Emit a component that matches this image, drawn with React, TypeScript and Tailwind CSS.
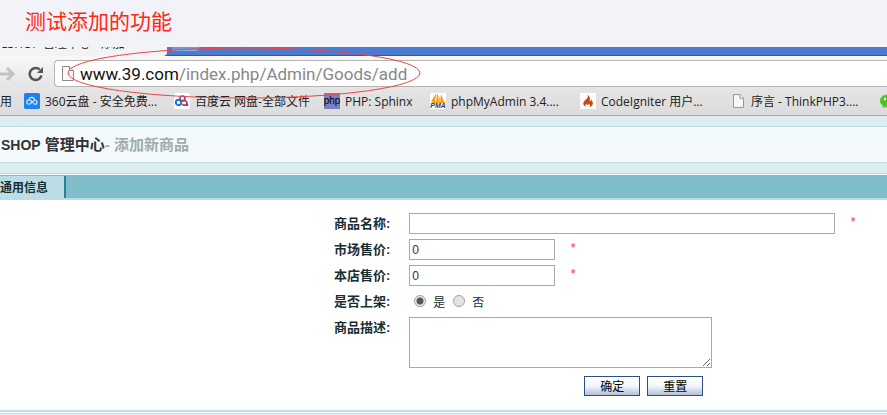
import type { ReactNode } from "react";

const uiFont = "font-['Open_Sans','Noto_Sans_CJK_SC',sans-serif]";
const pageFont = "font-['Liberation_Sans','Noto_Sans_CJK_SC',sans-serif]";

function PageIcon({ className }: { className: string }) {
  return (
    <svg viewBox="0 0 12 15" className={className} fill="#f8f8f8" stroke="#8c8c8c" aria-hidden="true">
      <path d="M.5.5h7l4 4v10H.5z" />
      <path d="M7.5.5v4h4" />
    </svg>
  );
}

function CloudDriveIcon() {
  return (
    <svg viewBox="0 0 16 16" className="size-4" aria-hidden="true">
      <rect width="16" height="16" rx="1.5" fill="#2380ee" />
      <path
        d="M9.500 10.200 8 8.700C6.800 7.500 5.900 6.900 4.900 6.900a2.100 2.100 0 0 0 0 4.300c1.500 0 2.500-1.200 3.400-2.300.8-1 1.500-1.700 2.700-1.700a2 2 0 0 1 0 4c-.6 0-1.100-.3-1.500-1M5 6.800C5.300 5.200 6.400 4.400 7.800 4.400c1.500 0 2.600 1 2.900 2.600"
        fill="none"
        stroke="#c9f1ff"
        strokeWidth="1.100"
      />
    </svg>
  );
}

function BaiduDriveIcon() {
  return (
    <svg viewBox="0 0 16 16" className="size-4" aria-hidden="true">
      <rect width="16" height="16" rx="2" fill="#fff" />
      <circle cx="8.500" cy="5.500" r="2.500" fill="none" stroke="#1d6fd8" strokeWidth="1.600" />
      <circle cx="4.500" cy="9.500" r="2.700" fill="none" stroke="#1d6fd8" strokeWidth="1.900" />
      <path d="M7 8.500c1.800-1.500 3.400-1.500 4.800-.4 2 1.500 1.300 3.900-.8 4.100-1.200.1-2-.4-2.600-1.300" fill="none" stroke="#e02c2c" strokeWidth="1.800" />
      <circle cx="13.200" cy="12" r="1.200" fill="#1d6fd8" />
    </svg>
  );
}

function PhpIcon() {
  return (
    <span className="flex size-4 items-center justify-center overflow-hidden bg-[#7b7fc0] font-['Liberation_Sans',sans-serif] text-[10px] leading-4 text-black">
      php
    </span>
  );
}

function PmaIcon() {
  return (
    <span className="relative flex size-4 items-end justify-center overflow-hidden bg-white font-['Liberation_Sans',sans-serif] text-[7px] leading-[6px] font-bold text-[#33335f] italic">
      <svg viewBox="0 0 16 10" className="absolute top-0 left-0 h-[10px] w-4" aria-hidden="true">
        <path d="M6 0 5 9H1zM7 1h1l1 8H6zM11 1l3 8h-4zM3 9h12v1H2z" fill="#f59c12" />
        <path d="m9 2 2 7H9z" fill="#f8c25c" />
      </svg>
      PMA
    </span>
  );
}

function FlameIcon() {
  return (
    <svg viewBox="0 0 16 16" className="size-4" aria-hidden="true">
      <path fill="#fff" d="M0 0h16v16H0z" />
      <path
        d="M7.600 1.800c.8 1.700.1 2.900-1.200 4.200C5 7.300 3.300 8.500 3.300 10.600c0 1.500 1 2.800 2.700 3.300-1-1.200-.6-2.500.6-3.300-.1 1 .3 1.500 1 1.500.8-.1 1-.9.7-1.700 1.600.8 2.200 2.300 1.200 3.600 2-.5 3.400-1.900 3.400-3.800 0-1.800-1.400-2.700-1.800-4.200-.5.800-.5 1.500-.1 2.300-.7 0-1.300-.4-1.300-1.300.5-2-.2-4-2.100-5.200"
        fill="#d1450c"
      />
    </svg>
  );
}

function ChatIcon() {
  return (
    <svg viewBox="0 0 16 16" className="size-4" aria-hidden="true">
      <path d="M8 1.500c4.500 0 8 2.900 8 6.500s-3.500 6.500-8 6.500c-1 0-2-.1-2.900-.4L2.500 15l.5-2.200C1.200 11.600 0 9.900 0 8c0-3.600 3.500-6.500 8-6.500" fill="#52c22b" />
      <circle cx="5" cy="6" r="1.200" fill="#fff" />
      <circle cx="11" cy="6" r="1.200" fill="#fff" />
    </svg>
  );
}

function Bookmark({ icon, label, narrow }: { icon: ReactNode; label: string; narrow?: boolean }) {
  return (
    <a href="#" className={`flex shrink-0 items-center gap-[5px] ${narrow ? "w-[106px]" : "w-[150px]"}`}>
      {icon}
      <span className="pt-px whitespace-nowrap">{label}</span>
    </a>
  );
}

function Browser() {
  return (
    <div className={`relative ${uiFont}`}>
      <div className="flex h-[9px] border-b border-[#2f57a3] bg-[#4a7bd0]">
        <div className="flex h-[9px] w-[167px] shrink-0 items-end overflow-hidden rounded-br bg-[#f3f3f3] text-[12px] leading-4 whitespace-nowrap text-[#222]">
          <span className="mb-1">CSHOP 管理中心 - 添加 ×</span>
        </div>
        <div className="ml-[5px] h-1 w-[27px] rounded-b-sm border-b border-[#8fb1e8] bg-[#6f97dc]" />
      </div>
      <div className="flex h-[31px] items-center bg-gradient-to-b from-[#f8f8f8] to-[#e5e5e5] pt-1">
        <button type="button" aria-label="Forward" className="w-[27px] shrink-0">
          <svg viewBox="0 0 27 18" className="h-[18px] w-[27px]" fill="none" stroke="#c2c2c2" strokeWidth="3">
            <path d="M0 9h12M7 3l6 6-6 6" />
          </svg>
        </button>
        <button type="button" aria-label="Reload" className="w-[27px] shrink-0">
          <svg viewBox="0 0 27 18" className="h-[18px] w-[27px]" fill="none" stroke="#555" strokeWidth="2.500">
            <path d="M14.500 10.500A6 6 0 1 1 12.800 4.600" />
            <path d="M16 2v6H10z" fill="#555" stroke="none" />
          </svg>
        </button>
        <div className="flex h-[27px] min-w-0 flex-1 items-center gap-[6px] rounded-l-sm border border-r-0 border-[#b4b4b4] bg-white pl-[7px]">
          <PageIcon className="h-[15px] w-3 shrink-0" />
          <a href="#" className="font-['Roboto',sans-serif] text-[17px] leading-6 whitespace-nowrap text-[#888]">
            <span className="text-[#111]">www.39.com</span>/index.php/Admin/Goods/add
          </a>
        </div>
      </div>
      <nav className="flex h-[29px] items-center overflow-hidden border-b border-[#a7a7a7] bg-gradient-to-b from-[#e5e5e5] to-[#dcdcdc] text-[12px] leading-4 text-[#222]">
        <a href="#" className="w-6 shrink-0 pt-px">用</a>
        <Bookmark icon={<CloudDriveIcon />} label="360云盘 - 安全免费..." />
        <Bookmark icon={<BaiduDriveIcon />} label="百度云 网盘-全部文件" />
        <Bookmark icon={<PhpIcon />} label="PHP: Sphinx" narrow />
        <Bookmark icon={<PmaIcon />} label="phpMyAdmin 3.4...." />
        <Bookmark icon={<FlameIcon />} label="CodeIgniter 用户..." />
        <Bookmark icon={<span className="flex w-4 justify-center"><PageIcon className="h-[14px] w-[11px]" /></span>} label="序言 - ThinkPHP3...." />
        <Bookmark icon={<ChatIcon />} label="" />
      </nav>
      <svg viewBox="0 0 354 52" className="pointer-events-none absolute top-0 left-[67px] h-[52px] w-[354px]" fill="none" stroke="#ee4545" aria-hidden="true">
        <ellipse cx="177" cy="26" rx="176" ry="25" />
      </svg>
    </div>
  );
}

function Row({ label, htmlFor, children }: { label: string; htmlFor?: string; children: ReactNode }) {
  return (
    <div className="grid h-[21px] grid-cols-[44%_1fr]">
      <label htmlFor={htmlFor} id={htmlFor ? undefined : "sale-label"} className="text-right text-[13px] leading-[22px] font-bold">
        {label}:
      </label>
      <div className="flex items-start pl-[19px]">{children}</div>
    </div>
  );
}

function Star() {
  return <span className="ml-[14px] font-['Liberation_Mono',monospace] text-[13px] leading-5 text-[#ff3050]">*</span>;
}

const field = "h-[21px] border border-[#a9a9a9] bg-white px-[2px] font-['Liberation_Sans',sans-serif] text-[12px] text-[#333] outline-none";
const action =
  "h-5 w-14 border border-[#2b5089] bg-gradient-to-b from-white via-[#f3f8fc] to-[#b3bfd8] pt-px text-[12px] leading-[18px] text-black";
const radio =
  "size-3 appearance-none rounded-full border border-[#a2a2a2] bg-[#e3e3e3] checked:bg-[radial-gradient(circle,#555_3px,#e6e6e6_4px)]";

export default function App() {
  return (
    <div className="overflow-hidden bg-[#ddeef2]">
      <header className="bg-[#f2f3f8] px-[25px] pb-[7px]">
        <p className="font-['Noto_Sans_CJK_SC',sans-serif] text-[21px] leading-10 text-[#ff2614]">测试添加的功能</p>
      </header>
      <Browser />
      <main className={`pt-[10px] text-[12px] text-[#192e32] ${pageFont}`}>
        <h1 className="border-y border-[#bbdde5] bg-[#f4fafb] pl-px text-[15px] leading-[35px] font-bold text-[#333]">
          <span className="text-[14px] leading-none">SHOP</span> 管理中心<span className="text-[#9eadac]">- 添加新商品</span>
        </h1>
        <div className="mt-[10px] flex h-[27px] border-t border-b-2 border-[#bbdde5] bg-[#80bdcb] pt-[2px] shadow-[inset_0_1px_#f4fafb]">
          <button type="button" className="w-[66px] border-r-2 border-[#278296] bg-[#bbdde5] pt-px text-left leading-[22px] font-bold">
            通用信息
          </button>
        </div>
        <form className="flex flex-col gap-[5px] border-b-2 border-[#bbdde5] bg-white pt-[13px] pb-[14px]" onSubmit={(e) => e.preventDefault()}>
          <Row label="商品名称" htmlFor="goods-name">
            <input id="goods-name" className={`${field} w-[426px]`} />
            <Star />
          </Row>
          <Row label="市场售价" htmlFor="market-price">
            <input id="market-price" defaultValue="0" className={`${field} w-[146px]`} />
            <Star />
          </Row>
          <Row label="本店售价" htmlFor="shop-price">
            <input id="shop-price" defaultValue="0" className={`${field} w-[146px]`} />
            <Star />
          </Row>
          <Row label="是否上架">
            <div role="radiogroup" aria-labelledby="sale-label" className="flex gap-2 pl-[5px] leading-[21px]">
              <label className="flex gap-[7px]">
                <input type="radio" name="sale" defaultChecked className={`${radio} mt-1`} />
                <span className="pt-[2px]">是</span>
              </label>
              <label className="flex gap-[7px]">
                <input type="radio" name="sale" className={`${radio} mt-1`} />
                <span className="pt-[2px]">否</span>
              </label>
            </div>
          </Row>
          <div className="grid grid-cols-[44%_1fr]">
            <label htmlFor="goods-desc" className="text-right text-[13px] leading-[22px] font-bold">商品描述:</label>
            <div className="flex pl-[19px]">
              <textarea id="goods-desc" className="h-[51px] w-[303px] resize border border-[#a9a9a9] bg-white px-[2px] outline-none" />
            </div>
          </div>
          <div className="grid grid-cols-[44%_1fr] pt-[3px]">
            <div className="col-start-2 flex w-[313px] justify-end gap-[7px]">
              <button type="submit" className={action}>确定</button>
              <button type="reset" className={action}>重置</button>
            </div>
          </div>
        </form>
        <div className="h-[3px] border-t border-white bg-[#ddeef2]">
          <div className="h-px bg-[#bbdde5]" />
        </div>
      </main>
    </div>
  );
}
